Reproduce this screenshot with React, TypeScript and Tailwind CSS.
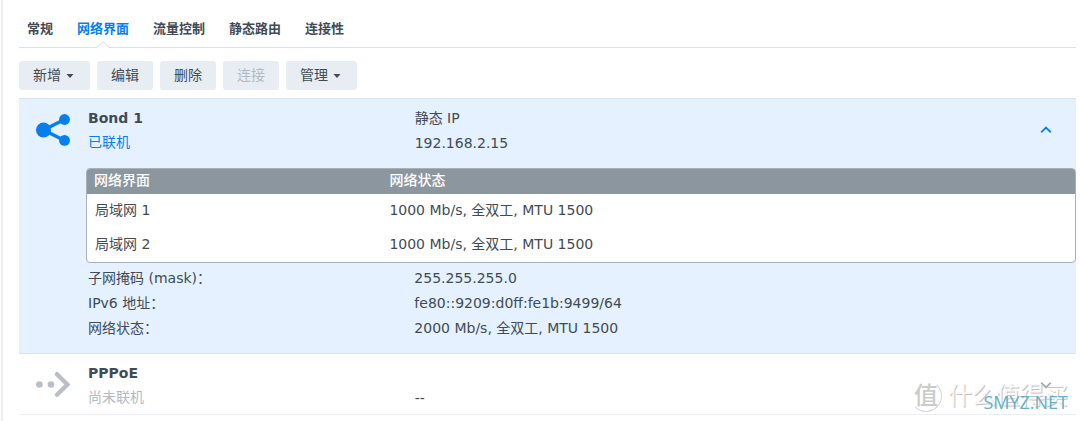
import React, { useState } from 'react';

// --- Type Definitions ---
interface Detail {
  label: string;
  value: string;
}

interface ToolbarItem {
  label: string;
  hasMenu?: boolean;
  disabled?: boolean;
}

// --- Page Data ---
const tabs = ['常规', '网络界面', '流量控制', '静态路由', '连接性'];

const toolbar: ToolbarItem[] = [
  { label: '新增', hasMenu: true },
  { label: '编辑' },
  { label: '删除' },
  { label: '连接', disabled: true },
  { label: '管理', hasMenu: true },
];

const members = [
  { name: '局域网 1', status: '1000 Mb/s, 全双工, MTU 1500' },
  { name: '局域网 2', status: '1000 Mb/s, 全双工, MTU 1500' },
];

const details: Detail[] = [
  { label: '子网掩码 (mask)：', value: '255.255.255.0' },
  { label: 'IPv6 地址：', value: 'fe80::9209:d0ff:fe1b:9499/64' },
  { label: '网络状态：', value: '2000 Mb/s, 全双工, MTU 1500' },
];

// --- Icons ---
const BondIcon = () => (
  <svg className="h-8 w-[34px]" viewBox="0 0 34 32" fill="#057feb" aria-hidden="true">
    <path d="M28.5 5.5 7.5 16l21 10.5" fill="none" stroke="#057feb" strokeWidth="3.4" />
    <circle cx="7.5" cy="16" r="7.5" />
    <circle cx="28.5" cy="5.5" r="5.4" />
    <circle cx="28.5" cy="26.4" r="5.4" />
  </svg>
);

const PppoeIcon = () => (
  <svg className="h-8 w-[34px]" viewBox="0 0 34 32" fill="#b9bfc5" aria-hidden="true">
    <circle cx="3.4" cy="15.5" r="3.3" />
    <circle cx="15" cy="15.5" r="3.3" />
    <path d="M21 5.2 31.4 15.5 21 25.8" fill="none" stroke="#b9bfc5" strokeWidth="4.4" strokeLinecap="round" />
  </svg>
);

const Chevron = ({ up = false, color }: { up?: boolean; color: string }) => (
  <svg className="h-3 w-3" viewBox="0 0 12 12" fill="none" stroke={color} strokeWidth="1.8" aria-hidden="true">
    <path d={up ? 'M1.2 8.3 6 3.6l4.8 4.7' : 'M1.2 3.7 6 8.4l4.8-4.7'} />
  </svg>
);

// --- Watermark ---
const Watermark = () => (
  <div className="pointer-events-none absolute right-2 bottom-0 flex items-center gap-1.5 pb-0.5">
    <span className="flex h-8 w-8 items-center justify-center rounded-full border border-white border-r-[#d4d4d4] border-b-[#d4d4d4] font-['Liberation_Serif','Noto_Sans_CJK_SC',serif] text-2xl leading-none font-medium text-[#cbcbcb]">
      值
    </span>
    <span className="text-2xl leading-8 text-[#f9f9f9] [text-shadow:1px_1px_0_#c4c4c4]">什么值得买</span>
    <span className="absolute right-0 bottom-0 font-['Open_Sans',sans-serif] text-lg leading-6 text-[#64b0c4]">
      SMYZ.NET
    </span>
  </div>
);

// --- Main Component ---
const App = () => {
  const [activeTab, setActiveTab] = useState('网络界面');
  const [bondOpen, setBondOpen] = useState(true);

  return (
    <main className="ml-px min-h-screen border-l-2 border-[#ebeff5] bg-white pr-1 pl-4 font-['DejaVu_Sans','Noto_Sans_CJK_SC',sans-serif] text-sm leading-[25px] text-[#414b55]">
      <nav className="flex gap-6 border-b border-[#d8e2eb] px-2 pt-4 text-[13px] font-bold">
        {tabs.map((tab) => (
          <button
            key={tab}
            onClick={() => setActiveTab(tab)}
            className={`relative h-[31px] pb-1.5 whitespace-nowrap ${tab === activeTab ? 'text-[#057feb]' : ''}`}
          >
            {tab}
            {/* Notch that joins the active tab to the line */}
            {tab === activeTab && (
              <svg className="absolute -bottom-px left-1/2 h-[7px] w-[14px] -translate-x-1/2" viewBox="0 0 14 7" aria-hidden="true">
                <path d="M0 7h14L7 .8z" fill="#fff" />
                <path d="M0 6.5h.8L7 .8l6.2 5.7h.8" fill="none" stroke="#d0dce7" />
              </svg>
            )}
          </button>
        ))}
      </nav>

      <div className="flex gap-[7px] pt-[13px] pb-2">
        {toolbar.map((item) => (
          <button
            key={item.label}
            disabled={item.disabled}
            className="flex h-[29px] items-center gap-[5px] rounded-[3px] bg-[#e8edf3] px-3.5 whitespace-nowrap disabled:text-[#b4bac1]"
          >
            {item.label}
            {item.hasMenu && (
              <svg className="mr-0.5 h-1 w-2" viewBox="0 0 8 4" fill="#414b55" aria-hidden="true">
                <path d="M.5 0h7L4 4z" />
              </svg>
            )}
          </button>
        ))}
      </div>

      {/* Bond 1 */}
      <section className="border-y border-[#d8e5f0] bg-[#e5f1fe] pt-[7px] pb-3">
        <div className="flex">
          <div className="flex w-[68px] shrink-0 justify-center pt-2">
            <BondIcon />
          </div>
          <div className="w-[31%] shrink-0 pl-px">
            <h2 className="font-bold">Bond 1</h2>
            <p className="leading-[23px] text-[#057feb]">已联机</p>
          </div>
          <div className="flex-1">
            <p>静态 IP</p>
            <p>192.168.2.15</p>
          </div>
          <button aria-label="Bond 1" aria-expanded={bondOpen} onClick={() => setBondOpen(!bondOpen)} className="px-6 pb-0.5">
            <Chevron up={bondOpen} color="#057feb" />
          </button>
        </div>

        {bondOpen && (
          <>
            <div className="mt-3 mb-[3px] ml-[67px] overflow-hidden rounded border border-[#a9b1b8] bg-white">
              <table className="w-full table-fixed text-left">
                <thead className="bg-[#8c969f] text-white">
                  <tr>
                    <th className="w-[30%] pb-[3px] pl-[7px] leading-[22px] font-medium">网络界面</th>
                    <th className="pb-[3px] pl-1.5 leading-[22px] font-medium">网络状态</th>
                  </tr>
                </thead>
                <tbody>
                  {members.map((member) => (
                    <tr key={member.name}>
                      <td className="pt-1 pb-[5px] pl-2">{member.name}</td>
                      <td className="pt-1 pb-[5px] pl-1.5">{member.status}</td>
                    </tr>
                  ))}
                </tbody>
              </table>
            </div>
            <dl className="pl-[68px]">
              {details.map((detail) => (
                <div key={detail.label} className="flex">
                  <dt className="w-[33%] shrink-0 pl-px">{detail.label}</dt>
                  <dd className="pl-px">{detail.value}</dd>
                </div>
              ))}
            </dl>
          </>
        )}
      </section>

      {/* PPPoE */}
      <section className="relative flex border-b border-[#ebeff5] pt-[7px] pb-[3px]">
        <div className="flex w-[68px] shrink-0 justify-center pt-2">
          <PppoeIcon />
        </div>
        <div className="w-[31%] shrink-0 pl-px">
          <h2 className="font-bold">PPPoE</h2>
          <p className="leading-[23px] text-[#b4bac1]">尚未联机</p>
        </div>
        <p className="flex-1 pt-[25px]">--</p>
        <Watermark />
        <button aria-label="PPPoE" aria-expanded={false} className="relative px-6 pb-0.5">
          <Chevron color="#a4abb2" />
        </button>
      </section>
    </main>
  );
};

export default App;
